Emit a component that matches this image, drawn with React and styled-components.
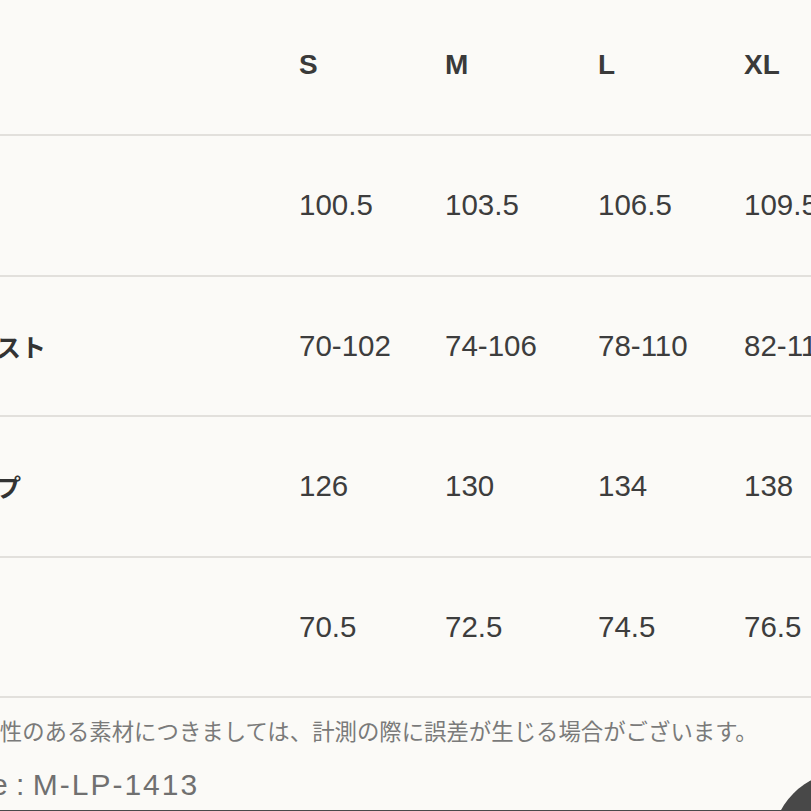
import React from 'react';
import styled, { createGlobalStyle } from 'styled-components';

const GlobalStyle = createGlobalStyle`
    html, body {
        margin: 0;
        padding: 0;
        background: #fbfaf7;
        overflow: hidden;
    }
`;

const Page = styled.div`
    box-sizing: border-box;
    height: 811px;
    overflow: hidden;
    border-bottom: 1px solid #4a4a4a;
    font-family: "Liberation Sans", "Noto Sans CJK JP", sans-serif;
    color: #3b3b3b;
`;

const Table = styled.div`
    margin-left: -54px;
    width: 920px;
`;

const Row = styled.div`
    display: grid;
    grid-template-columns: 353px 146px 153px 146px auto;
    align-items: center;
    height: ${p => p.$head ? '130px' : '138.5px'};
    padding-bottom: ${p => p.$head ? '4px' : '0'};
    border-bottom: 2px solid #e2e0dc;
`;

const Label = styled.div`
    font-family: "Noto Sans CJK JP", sans-serif;
    font-weight: 700;
    font-size: 25px;
    color: #333;
`;

const Size = styled.div`
    font-weight: 700;
    font-size: 28px;
    color: #3a3a3a;
`;

const Cell = styled.div`
    font-size: 29.5px;
    color: #3d3d3d;
`;

const Note = styled.p`
    margin: 16px 0 0 -45px;
    font-family: "Noto Sans CJK JP", sans-serif;
    font-size: 22.4px;
    color: #7a7a7a;
    white-space: nowrap;
`;

const Code = styled.p`
    margin: 22px 0 0 -64px;
    font-family: "Liberation Sans", "Noto Sans CJK JP", sans-serif;
    font-size: 30px;
    color: #707070;
    white-space: nowrap;
`;

Code.Value = styled.span`
    letter-spacing: 2px;
`;

const ChatButton = styled.div`
    position: fixed;
    left: 772px;
    top: 772px;
    width: 146px;
    height: 146px;
    border-radius: 50%;
    background: #484848;
`;

const sizes = ['S', 'M', 'L', 'XL'];

const rows = [
    { label: '身幅', values: ['100.5', '103.5', '106.5', '109.5'] },
    { label: 'ウエスト', values: ['70-102', '74-106', '78-110', '82-114'] },
    { label: 'ヒップ', values: ['126', '130', '134', '138'] },
    { label: '総丈', values: ['70.5', '72.5', '74.5', '76.5'] },
];

export default function App() {
    return (
        <Page>
            <GlobalStyle />
            <Table>
                <Row $head>
                    <div />
                    {sizes.map(s => <Size key={s}>{s}</Size>)}
                </Row>
                {rows.map(row =>
                    <Row key={row.label}>
                        <Label>{row.label}</Label>
                        {row.values.map((v, i) => <Cell key={i}>{v}</Cell>)}
                    </Row>
                )}
            </Table>
            <Note>伸縮性のある素材につきましては、計測の際に誤差が生じる場合がございます。</Note>
            <Code>Code : <Code.Value>M-LP-1413</Code.Value></Code>
            <ChatButton />
        </Page>
    );
}
